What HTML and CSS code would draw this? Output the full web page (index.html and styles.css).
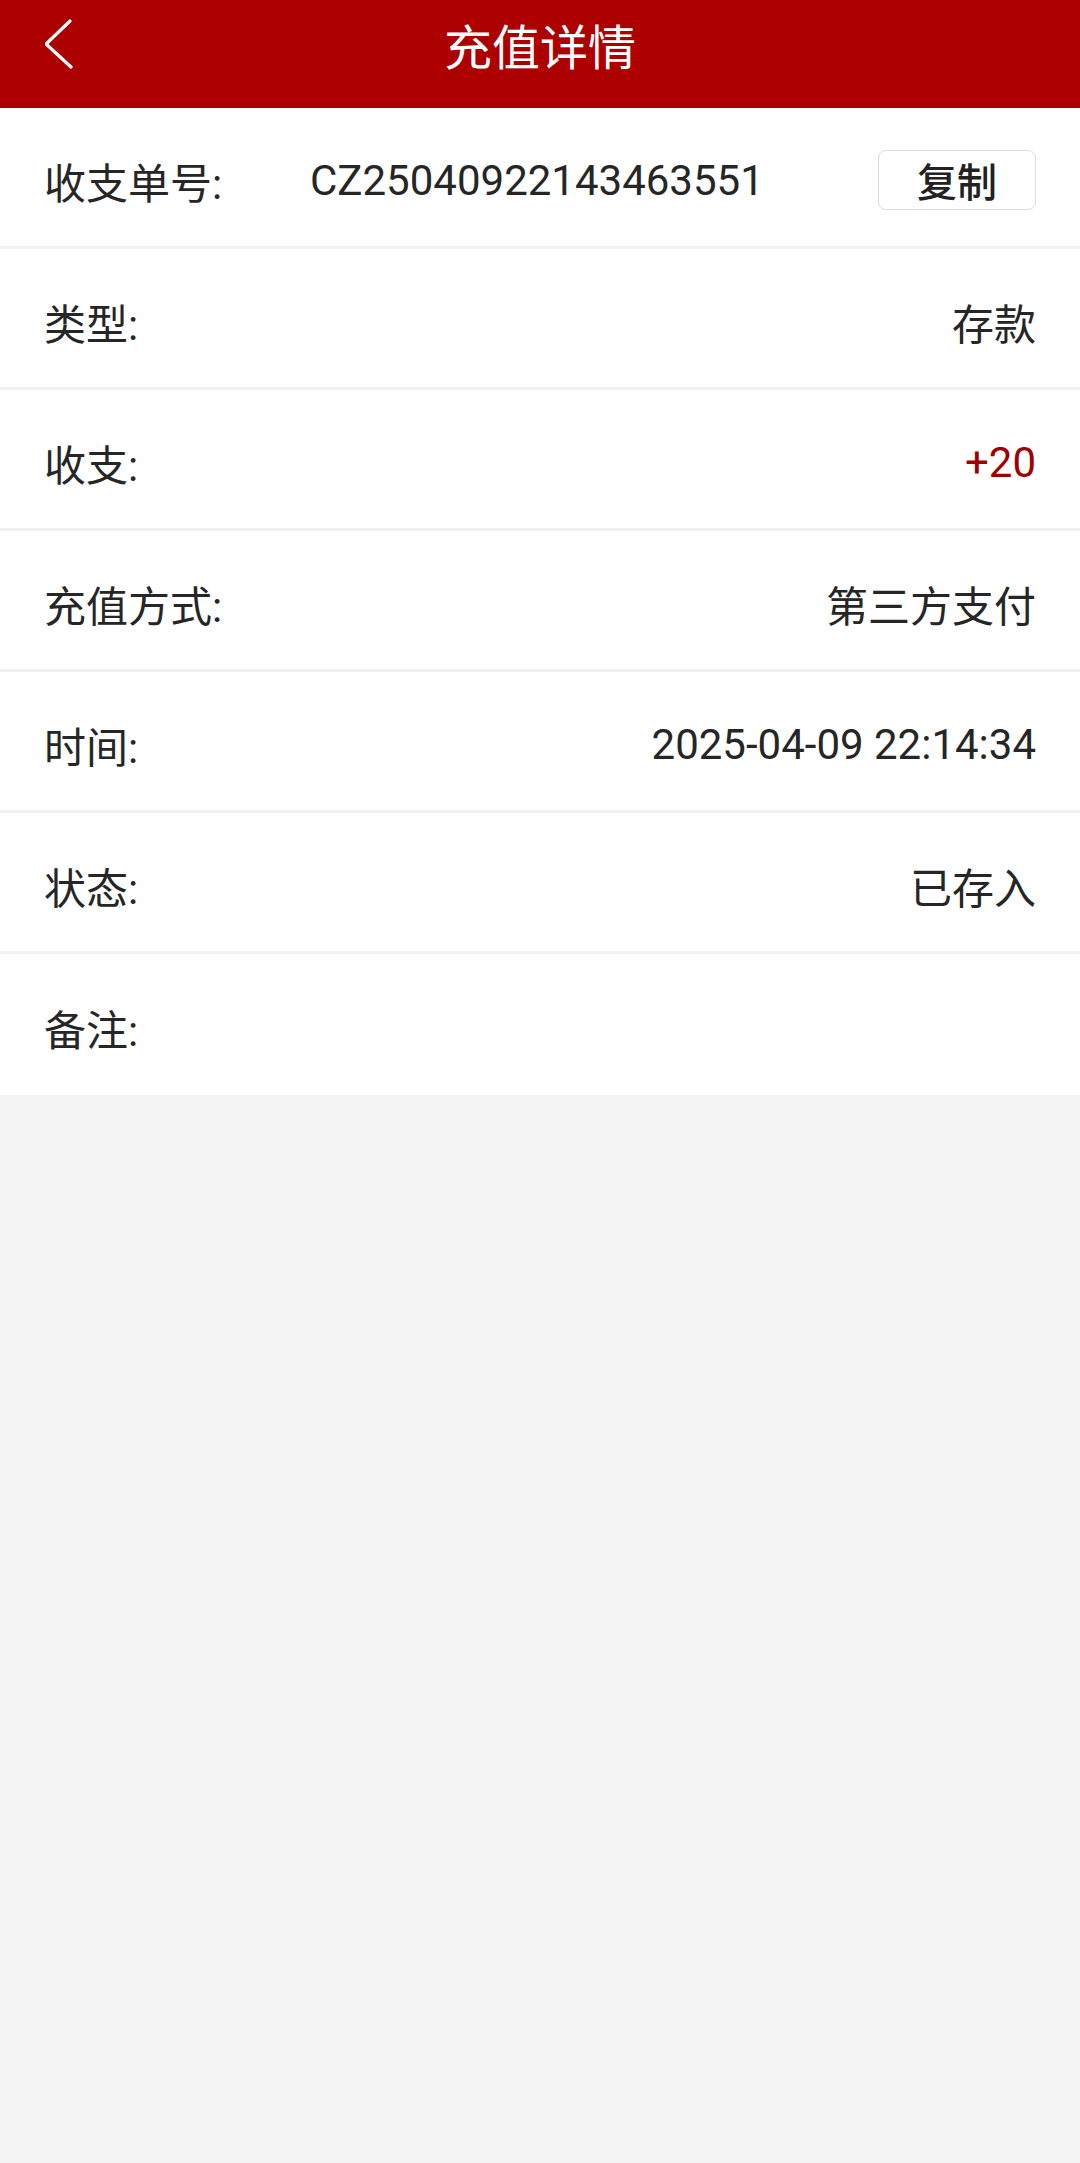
FILE: index.html
```html
<!DOCTYPE html>
<html lang="zh-CN">
<head>
  <meta charset="UTF-8">
  <meta name="viewport" content="width=device-width, initial-scale=1.0">
  <title>充值详情</title>
  <link rel="stylesheet" href="styles.css">
</head>
<body>
  <!-- Cabeçalho -->
  <header class="topbar">
    <a href="#" class="back">
      <svg width="40" height="60" viewBox="0 0 40 60">
        <polyline points="25,11 1,34 26,57" fill="none" stroke="#fff" stroke-width="3.2" stroke-linecap="round" stroke-linejoin="round"/>
      </svg>
    </a>
    <h1 class="title">充值详情</h1>
  </header>

  <!-- Detalhes -->
  <div class="detail">
    <div class="row">
      <span class="label label-wide">收支单号:</span>
      <span class="order">CZ25040922143463551</span>
      <button class="copy">复制</button>
    </div>
    <div class="row">
      <span class="label">类型:</span>
      <span class="value">存款</span>
    </div>
    <div class="row">
      <span class="label">收支:</span>
      <span class="value amount">+20</span>
    </div>
    <div class="row">
      <span class="label">充值方式:</span>
      <span class="value">第三方支付</span>
    </div>
    <div class="row">
      <span class="label">时间:</span>
      <span class="value">2025-04-09 22:14:34</span>
    </div>
    <div class="row">
      <span class="label">状态:</span>
      <span class="value">已存入</span>
    </div>
    <div class="row">
      <span class="label">备注:</span>
      <span class="value"></span>
    </div>
  </div>
</body>
</html>
```

FILE: styles.css
```css
body {
  margin: 0;
  background: #f3f3f3;
  font-family: Roboto, "Noto Sans CJK SC", sans-serif;
  color: #262626;
}
.topbar {
  position: relative;
  height: 108px;
  background: #ad0000;
  display: flex;
  align-items: center;
  justify-content: center;
  padding-bottom: 20px;
  box-sizing: border-box;
}
.back {
  position: absolute;
  left: 45px;
  top: 10px;
  display: block;
  width: 40px;
  height: 60px;
}
.title {
  margin: 0;
  color: #fff;
  font-size: 48px;
  font-weight: normal;
}
.detail {
  background: #fff;
}
.row {
  height: 141px;
  box-sizing: border-box;
  padding: 6px 44px 0;
  display: flex;
  align-items: center;
  border-bottom: 3px solid #f1f1f1;
  font-size: 42px;
}
.row:last-child {
  border-bottom: none;
}
.label {
  flex: none;
}
.label-wide {
  width: 266px;
}
.order {
  flex: 1;
}
.value {
  margin-left: auto;
}
.amount {
  color: #a00000;
}
.copy {
  width: 158px;
  height: 60px;
  padding: 0;
  border: 1px solid #dcdcdc;
  border-radius: 8px;
  background: #fff;
  color: #222;
  font-family: Roboto, "Noto Sans CJK SC", sans-serif;
  font-size: 40px;
  font-weight: 500;
  cursor: pointer;
}
```
